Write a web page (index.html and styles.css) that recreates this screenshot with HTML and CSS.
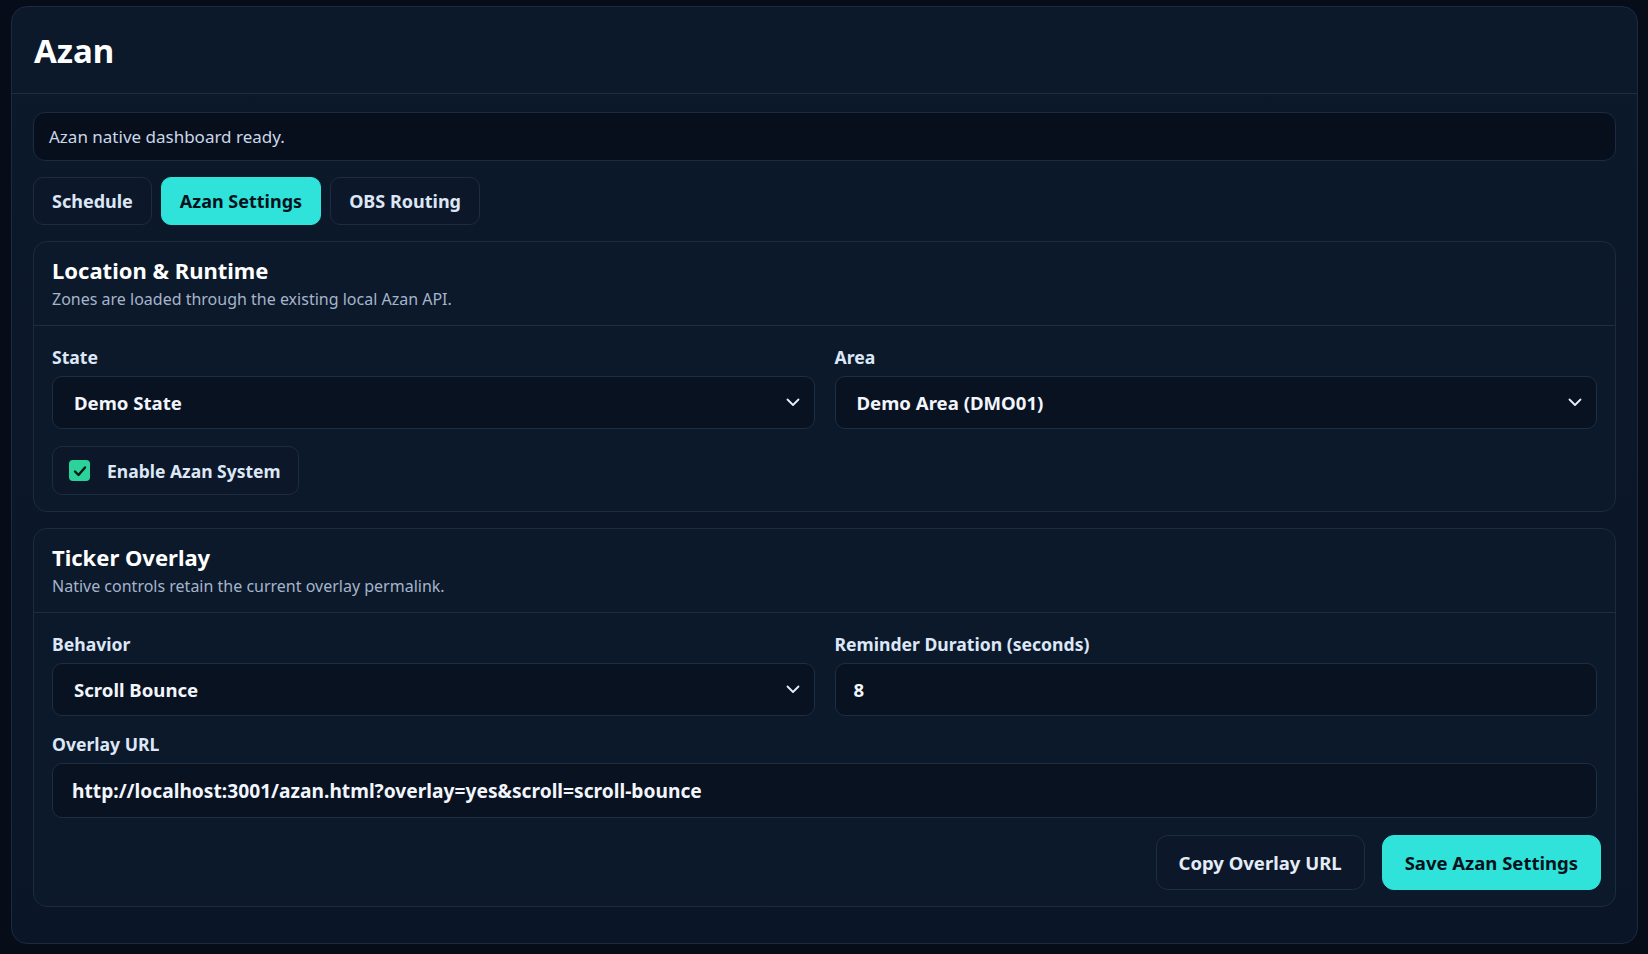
FILE: index.html
```html
<!DOCTYPE html>
<html lang="en">
<head>
    <meta charset="UTF-8">
    <meta name="viewport" content="width=device-width, initial-scale=1.0">
    <title>Azan</title>
    <link rel="stylesheet" href="styles.css">
</head>
<body>
    <div id="panel">
        <div id="panelHeader"><h1>Azan</h1></div>
        <div id="panelBody">
            <div id="statusBar">Azan native dashboard ready.</div>

            <div id="tabs">
                <button class="tab">Schedule</button>
                <button class="tab active">Azan Settings</button>
                <button class="tab">OBS Routing</button>
            </div>

            <div class="card">
                <div class="cardHead">
                    <h2>Location &amp; Runtime</h2>
                    <p>Zones are loaded through the existing local Azan API.</p>
                </div>
                <div class="cardBody">
                    <div class="grid">
                        <div class="field">
                            <label>State</label>
                            <div class="select">
                                <span>Demo State</span>
                                <svg width="14" height="9" viewBox="0 0 14 9"><path d="M1.5 1.5 L7 7 L12.5 1.5" fill="none" stroke="#e6eef9" stroke-width="1.8" stroke-linecap="round" stroke-linejoin="round"/></svg>
                            </div>
                        </div>
                        <div class="field">
                            <label>Area</label>
                            <div class="select">
                                <span>Demo Area (DMO01)</span>
                                <svg width="14" height="9" viewBox="0 0 14 9"><path d="M1.5 1.5 L7 7 L12.5 1.5" fill="none" stroke="#e6eef9" stroke-width="1.8" stroke-linecap="round" stroke-linejoin="round"/></svg>
                            </div>
                        </div>
                    </div>
                    <div class="checkRow">
                        <span class="checkBox">
                            <svg width="14" height="12" viewBox="0 0 14 12"><path d="M2 6.5 L5.5 10 L12 2.5" fill="none" stroke="#06181a" stroke-width="2.4" stroke-linecap="round" stroke-linejoin="round"/></svg>
                        </span>
                        <span>Enable Azan System</span>
                    </div>
                </div>
            </div>

            <div class="card">
                <div class="cardHead">
                    <h2>Ticker Overlay</h2>
                    <p>Native controls retain the current overlay permalink.</p>
                </div>
                <div class="cardBody">
                    <div class="grid">
                        <div class="field">
                            <label>Behavior</label>
                            <div class="select">
                                <span>Scroll Bounce</span>
                                <svg width="14" height="9" viewBox="0 0 14 9"><path d="M1.5 1.5 L7 7 L12.5 1.5" fill="none" stroke="#e6eef9" stroke-width="1.8" stroke-linecap="round" stroke-linejoin="round"/></svg>
                            </div>
                        </div>
                        <div class="field">
                            <label>Reminder Duration (seconds)</label>
                            <div class="input">8</div>
                        </div>
                    </div>
                    <div class="field">
                        <label>Overlay URL</label>
                        <div class="input url">http://localhost:3001/azan.html?overlay=yes&amp;scroll=scroll-bounce</div>
                    </div>
                    <div class="actions">
                        <button class="btn">Copy Overlay URL</button>
                        <button class="btn primary">Save Azan Settings</button>
                    </div>
                </div>
            </div>
        </div>
    </div>
</body>
</html>
```

FILE: styles.css
```css
body, h1, h2, p {
    margin: 0;
    padding: 0;
}

* {
    box-sizing: border-box;
}

body {
    font-family: 'Noto Sans', 'Open Sans', sans-serif;
    background-color: #060c18;
    color: #e6eef9;
    padding: 6px 10px 10px 11px;
}

button {
    font-family: inherit;
}

#panel {
    background: linear-gradient(180deg, #0c192b 0%, #0a1627 100%);
    border: 1px solid #1a2a40;
    border-radius: 16px;
}

#panelHeader {
    height: 87px;
    display: flex;
    align-items: center;
    padding: 0 22px;
    border-bottom: 1px solid #1c2d44;
}

#panelHeader h1 {
    font-size: 33px;
    font-weight: 700;
    color: #ffffff;
}

#panelBody {
    padding: 18px 21px 36px;
}

#statusBar {
    height: 49px;
    display: flex;
    align-items: center;
    padding: 0 15px;
    background-color: #070f1d;
    border: 1px solid #1a2b42;
    border-radius: 12px;
    font-size: 17px;
    color: #cbd7e8;
}

#tabs {
    display: flex;
    gap: 9px;
    margin-top: 16px;
}

.tab {
    height: 48px;
    padding: 0 18px;
    border-radius: 10px;
    border: 1px solid #1c2c43;
    background-color: #0c1829;
    color: #dce6f5;
    font-size: 18px;
    font-weight: 700;
}

.tab.active {
    background-color: #2fe3da;
    border-color: #2fe3da;
    color: #04121c;
}

.card {
    margin-top: 16px;
    border: 1px solid #1a2b42;
    border-radius: 14px;
    background-color: #0c192b;
}

.cardHead {
    height: 84px;
    padding: 14px 18px 0;
    border-bottom: 1px solid #1c2d44;
}

.cardHead h2 {
    font-size: 22px;
    line-height: 28px;
    font-weight: 700;
    color: #ffffff;
}

.cardHead p {
    margin-top: 4px;
    font-size: 16px;
    line-height: 22px;
    color: #a5b4ca;
}

.cardBody {
    padding: 20px 18px 16px;
    display: flex;
    flex-direction: column;
    gap: 17px;
}

.grid {
    display: grid;
    grid-template-columns: 1fr 1fr;
    gap: 20px;
}

.field {
    display: flex;
    flex-direction: column;
    gap: 8px;
}

.field label {
    font-size: 17.6px;
    line-height: 22px;
    font-weight: 700;
    color: #dce7f7;
}

.select, .input {
    height: 53px;
    display: flex;
    align-items: center;
    justify-content: space-between;
    background-color: #081221;
    border: 1px solid #1c2d44;
    border-radius: 10px;
    font-size: 18.6px;
    font-weight: 700;
    color: #f2f6fc;
}

.select {
    padding: 0 14px 0 21px;
}

.input {
    padding: 0 18px;
}

.input.url {
    height: 55px;
    padding: 0 18px 0 19px;
    font-size: 19.2px;
}

.checkRow {
    align-self: flex-start;
    height: 49px;
    display: flex;
    align-items: center;
    gap: 17px;
    padding: 0 17px 0 16px;
    border: 1px solid #1c2c43;
    border-radius: 10px;
    background-color: #0c1829;
    font-size: 17.5px;
    font-weight: 700;
    color: #dce7f7;
}

.checkBox {
    width: 21px;
    height: 21px;
    border-radius: 4px;
    background-color: #2bd39b;
    display: flex;
    align-items: center;
    justify-content: center;
}

.actions {
    display: flex;
    justify-content: flex-end;
    gap: 17px;
    margin-right: -4px;
}

.btn {
    height: 55px;
    padding: 0 22px;
    border-radius: 12px;
    border: 1px solid #1d2d44;
    background-color: #0c1829;
    color: #e4ecf8;
    font-size: 18.5px;
    font-weight: 700;
}

.btn.primary {
    background-color: #2fe3da;
    border-color: #2fe3da;
    color: #04121c;
}
```
